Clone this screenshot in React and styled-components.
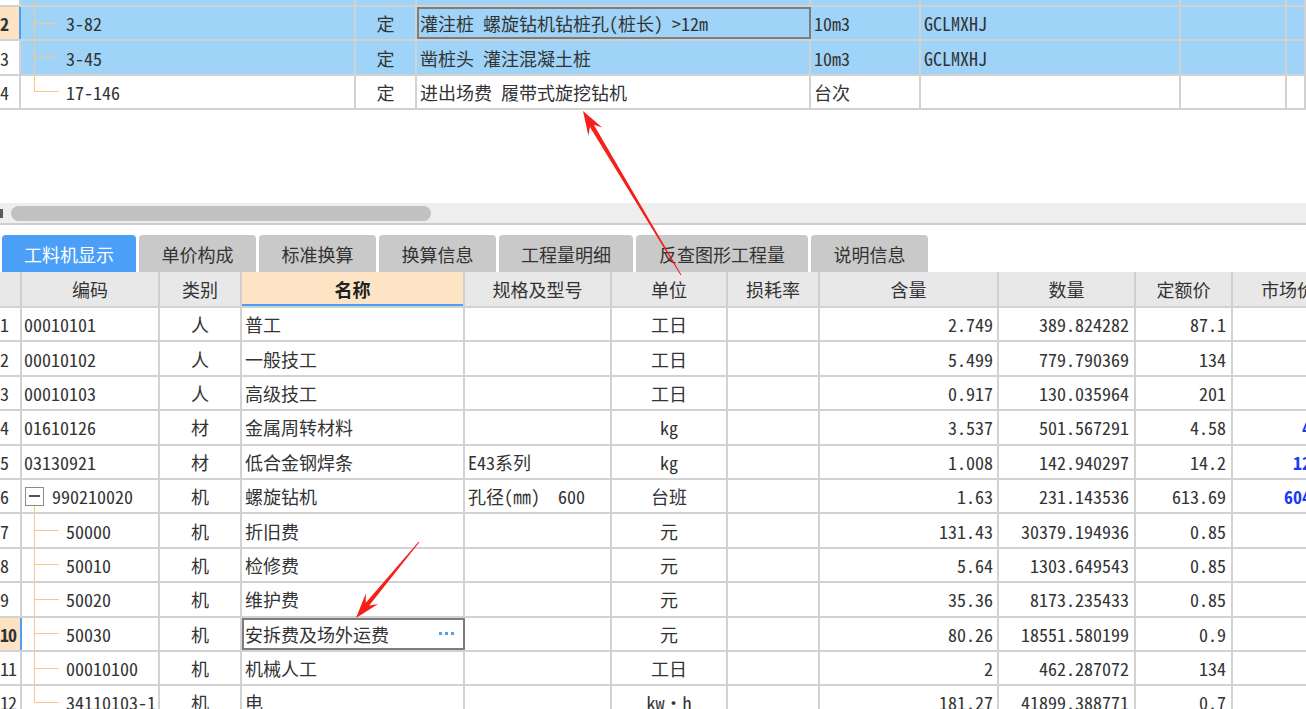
import React from 'react';
import styled, { createGlobalStyle, css } from 'styled-components';

const GlobalStyle = createGlobalStyle`
  *, *::before, *::after { box-sizing: border-box; }
  html, body { margin: 0; padding: 0; background: #fff; overflow: hidden; }
  body {
    font-family: "Noto Sans CJK SC", "Noto Sans", sans-serif;
    font-size: 18px;
    color: #333;
    font-feature-settings: "hwid" 1;
  }
`;

const LINE = '#d2d2d2';
const TREE = '#f8c68a';
const SEL = '#9fd3f8';
const CUR = '#fde3c2';
const BLUE = '#4a9ff5';

const Page = styled.div`
  position: relative;
  width: 1306px;
  height: 709px;
  overflow: hidden;
  background: #fff;
`;

const TopPane = styled.div`
  height: 203px;
  overflow: hidden;
`;

const ScrollOffset = styled.div`
  margin-top: -27.4px;
`;

const Row = styled.div`
  display: grid;
  grid-template-columns: ${p => p.$cols};
  height: 34.4px;
  border-bottom: 2px solid ${LINE};
  background: ${p => (p.$sel ? SEL : '#fff')};
`;

const Cell = styled.div`
  display: flex;
  align-items: center;
  justify-content: ${p => (p.$align === 'center' ? 'center' : p.$align === 'right' ? 'flex-end' : 'flex-start')};
  padding: 0 ${p => (p.$pad ?? 3)}px;
  border-right: 2px solid ${LINE};
  overflow: hidden;
  white-space: pre;
  min-width: 0;
  font-weight: ${p => (p.$bold ? 700 : 400)};
  color: ${p => (p.$blue ? '#1b3cf0' : '#333')};
  ${p => p.$focus && css`
    outline: 2px solid #7d7d7d;
    outline-offset: -2px;
  `}
`;

const NumCell = styled(Cell)`
  padding: 0;
  background: ${p => (p.$cur ? CUR : '#fff')};
  font-weight: ${p => (p.$cur ? 700 : 400)};
  border-right-color: ${p => (p.$cur ? BLUE : LINE)};
  letter-spacing: -1px;
`;

const CodeCell = styled(Cell)`
  padding: 0;
  ${p => p.$stem && css`
    background: linear-gradient(${TREE}, ${TREE}) 12px 100% / 1px 8px no-repeat;
  `}
`;

const Guide = styled.span`
  flex: none;
  align-self: stretch;
  width: 25px;
  margin-left: ${p => p.$indent}px;
  margin-right: 7px;
  background:
    linear-gradient(${TREE}, ${TREE}) 0 50% / 100% 1px no-repeat,
    linear-gradient(${TREE}, ${TREE}) 0 0 / 1px ${p => (p.$last ? '50%' : '100%')} no-repeat;
`;

const ExpandBox = styled.span`
  flex: none;
  width: 19px;
  height: 19px;
  margin: 0 8px 0 3px;
  border: 1px solid #8c8c8c;
  background: #fff;
  display: flex;
  align-items: center;
  justify-content: center;
  &::after {
    content: '';
    width: 11px;
    height: 1.5px;
    background: #555;
  }
`;

const Dots = styled.span`
  margin-left: auto;
  margin-right: 6px;
  display: flex;
  gap: 3px;
  & > i {
    width: 3px;
    height: 3px;
    background: #5b9fe0;
  }
`;

const ScrollTrack = styled.div`
  height: 22px;
  background: #eeeeee;
  border-bottom: 2px solid #cdcdcd;
  display: flex;
  align-items: center;
`;

const ScrollArrow = styled.span`
  width: 3px;
  height: 9px;
  background: #5a5a5a;
  margin-right: 8px;
`;

const ScrollThumb = styled.span`
  width: 420px;
  height: 15px;
  border-radius: 8px;
  background: #c1c1c1;
`;

const TabStrip = styled.div`
  margin-top: 9px;
  height: 38px;
  display: flex;
  align-items: flex-end;
  gap: 3px;
  padding-left: 2px;
  background: #fff;
`;

const Tab = styled.div`
  width: ${p => p.$w}px;
  height: 37px;
  display: flex;
  align-items: center;
  justify-content: center;
  border-radius: 4px 4px 0 0;
  background: ${p => (p.$active ? '#4b9ff6' : '#c9c9c9')};
  color: ${p => (p.$active ? '#fff' : '#333')};
  white-space: nowrap;
`;

const HeadRow = styled.div`
  display: grid;
  grid-template-columns: ${p => p.$cols};
  height: 36px;
  background: #e8e8e8;
  border-bottom: 2px solid ${LINE};
`;

const HeadCell = styled.div`
  display: flex;
  align-items: center;
  justify-content: center;
  border-right: 2px solid #d0d0d0;
  white-space: nowrap;
  overflow: hidden;
  color: #333;
  ${p => p.$active && css`
    background: #fde4c4;
    font-weight: 700;
    color: #222;
    box-shadow: inset 0 -2px 0 ${BLUE};
  `}
`;

const Overlay = styled.svg`
  position: absolute;
  left: 0;
  top: 0;
  pointer-events: none;
`;

const TOP_COLS = '21px 335px 61px 394px 110px 260px 106px 1fr';
const BOT_COLS = '22px 138px 82px 223px 147px 116px 92px 179px 137px 97px 112px';

const topRows = [
  { n: '1', code: '', name: '', unit: '', tag: '', sel: true, last: false },
  { n: '2', code: '3-82', name: '灌注桩 螺旋钻机钻桩孔(桩长) >12m', unit: '10m3', tag: 'GCLMXHJ', sel: true, cur: true, focus: true },
  { n: '3', code: '3-45', name: '凿桩头 灌注混凝土桩', unit: '10m3', tag: 'GCLMXHJ', sel: true },
  { n: '4', code: '17-146', name: '进出场费 履带式旋挖钻机', unit: '台次', tag: '', last: true },
];

const bottomRows = [
  { n: '1', code: '00010101', type: '人', name: '普工', spec: '', unit: '工日', qty: '2.749', amt: '389.824282', price: '87.1' },
  { n: '2', code: '00010102', type: '人', name: '一般技工', spec: '', unit: '工日', qty: '5.499', amt: '779.790369', price: '134' },
  { n: '3', code: '00010103', type: '人', name: '高级技工', spec: '', unit: '工日', qty: '0.917', amt: '130.035964', price: '201' },
  { n: '4', code: '01610126', type: '材', name: '金属周转材料', spec: '', unit: 'kg', qty: '3.537', amt: '501.567291', price: '4.58', market: '4.38' },
  { n: '5', code: '03130921', type: '材', name: '低合金钢焊条', spec: 'E43系列', unit: 'kg', qty: '1.008', amt: '142.940297', price: '14.2', market: '12.76' },
  { n: '6', code: '990210020', type: '机', name: '螺旋钻机', spec: '孔径(㎜)  600', unit: '台班', qty: '1.63', amt: '231.143536', price: '613.69', market: '604.26', parent: true },
  { n: '7', code: '50000', type: '机', name: '折旧费', spec: '', unit: '元', qty: '131.43', amt: '30379.194936', price: '0.85', child: true },
  { n: '8', code: '50010', type: '机', name: '检修费', spec: '', unit: '元', qty: '5.64', amt: '1303.649543', price: '0.85', child: true },
  { n: '9', code: '50020', type: '机', name: '维护费', spec: '', unit: '元', qty: '35.36', amt: '8173.235433', price: '0.85', child: true },
  { n: '10', code: '50030', type: '机', name: '安拆费及场外运费', spec: '', unit: '元', qty: '80.26', amt: '18551.580199', price: '0.9', child: true, cur: true, focus: true },
  { n: '11', code: '00010100', type: '机', name: '机械人工', spec: '', unit: '工日', qty: '2', amt: '462.287072', price: '134', child: true },
  { n: '12', code: '34110103-1', type: '机', name: '电', spec: '', unit: 'kw・h', qty: '181.27', amt: '41899.388771', price: '0.7', child: true, last: true },
];

const headers = ['', '编码', '类别', '名称', '规格及型号', '单位', '损耗率', '含量', '数量', '定额价', '市场价'];
const tabs = [
  { label: '工料机显示', w: 134 },
  { label: '单价构成', w: 117 },
  { label: '标准换算', w: 117 },
  { label: '换算信息', w: 117 },
  { label: '工程量明细', w: 134 },
  { label: '反查图形工程量', w: 172 },
  { label: '说明信息', w: 117 },
];

function arrowPoints(tail, tip, headLen, headW, neckW, tailW) {
  const dx = tip[0] - tail[0];
  const dy = tip[1] - tail[1];
  const len = Math.hypot(dx, dy);
  const ux = dx / len, uy = dy / len;
  const nx = -uy, ny = ux;
  const wing = [tip[0] - ux * headLen, tip[1] - uy * headLen];
  const neck = [tip[0] - ux * headLen * 0.72, tip[1] - uy * headLen * 0.72];
  const p = (b, s) => `${(b[0] + nx * s).toFixed(1)},${(b[1] + ny * s).toFixed(1)}`;
  return [
    p(tail, tailW / 2),
    p(neck, neckW / 2),
    p(wing, headW),
    `${tip[0]},${tip[1]}`,
    p(wing, -headW),
    p(neck, -neckW / 2),
    p(tail, -tailW / 2),
  ].join(' ');
}

function Arrows() {
  return (
    <Overlay width="1306" height="709" viewBox="0 0 1306 709">
      <polygon points={arrowPoints([681, 275], [583, 111], 24, 8, 4.5, 1)} fill="#f5201a" />
      <polygon points={arrowPoints([419, 542], [356, 618], 25, 8, 4.5, 1)} fill="#f5201a" />
    </Overlay>
  );
}

function TopGrid() {
  return (
    <TopPane>
      <ScrollOffset>
        {topRows.map(r => (
          <Row key={r.n} $cols={TOP_COLS} $sel={r.sel}>
            <NumCell $cur={r.cur}>{r.n}</NumCell>
            <CodeCell>
              <Guide $indent={13} $last={r.last} />
              {r.code}
            </CodeCell>
            <Cell $align="center">{r.n === '1' ? '' : '定'}</Cell>
            <Cell $focus={r.focus}>{r.name}</Cell>
            <Cell>{r.unit}</Cell>
            <Cell>{r.tag}</Cell>
            <Cell />
            <Cell />
          </Row>
        ))}
      </ScrollOffset>
    </TopPane>
  );
}

function BottomGrid() {
  return (
    <div>
      <HeadRow $cols={BOT_COLS}>
        {headers.map((h, i) => (
          <HeadCell key={i} $active={h === '名称'}>{h}</HeadCell>
        ))}
      </HeadRow>
      {bottomRows.map(r => (
        <Row key={r.n} $cols={BOT_COLS}>
          <NumCell $cur={r.cur}>{r.n}</NumCell>
          {r.child ? (
            <CodeCell>
              <Guide $indent={12} $last={r.last} />
              {r.code}
            </CodeCell>
          ) : r.parent ? (
            <CodeCell $stem>
              <ExpandBox />
              {r.code}
            </CodeCell>
          ) : (
            <Cell $pad={2}>{r.code}</Cell>
          )}
          <Cell $align="center">{r.type}</Cell>
          <Cell $focus={r.focus}>
            {r.name}
            {r.focus && (
              <Dots>
                <i />
                <i />
                <i />
              </Dots>
            )}
          </Cell>
          <Cell>{r.spec}</Cell>
          <Cell $align="center">{r.unit}</Cell>
          <Cell />
          <Cell $align="right" $pad={4}>{r.qty}</Cell>
          <Cell $align="right" $pad={5}>{r.amt}</Cell>
          <Cell $align="right" $pad={5}>{r.price}</Cell>
          <Cell $align="right" $pad={5} $bold $blue>{r.market || ''}</Cell>
        </Row>
      ))}
    </div>
  );
}

export default function App() {
  return (
    <Page>
      <GlobalStyle />
      <TopGrid />
      <ScrollTrack>
        <ScrollArrow />
        <ScrollThumb />
      </ScrollTrack>
      <TabStrip>
        {tabs.map((t, i) => (
          <Tab key={t.label} $w={t.w} $active={i === 0}>{t.label}</Tab>
        ))}
      </TabStrip>
      <BottomGrid />
      <Arrows />
    </Page>
  );
}
